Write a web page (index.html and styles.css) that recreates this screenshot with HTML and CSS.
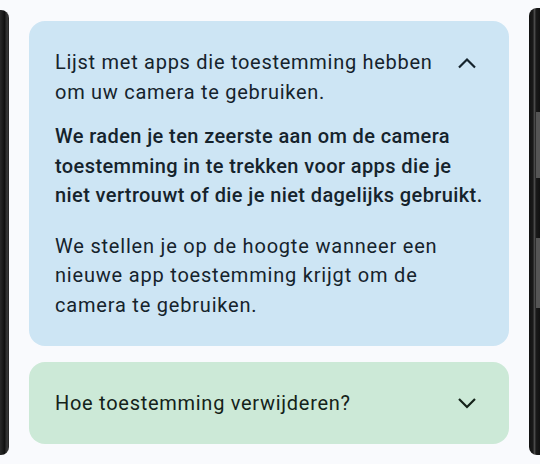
FILE: index.html
```html
<!DOCTYPE html>
<html lang="nl">
<head>
<meta charset="utf-8">
<link rel="stylesheet" href="styles.css">
</head>
<body>
<div class="frame">
  <div class="edge edge-left"></div>
  <main class="sheet">
    <section class="card card-blue">
      <div class="card-head">
        <p class="card-title">Lijst met apps die toestemming hebben om uw camera te gebruiken.</p>
        <svg class="chev chev-up" viewBox="0 0 20 12" width="20" height="12"><path d="M2 10.5 10 2.5l8 8"/></svg>
      </div>
      <p class="para strong">We raden je ten zeerste aan om de camera<br>toestemming in te trekken voor apps die je<br>niet vertrouwt of die je niet dagelijks gebruikt.</p>
      <p class="para">We stellen je op de hoogte wanneer een nieuwe app toestemming krijgt om de camera te gebruiken.</p>
    </section>
    <section class="card card-green">
      <div class="card-head">
        <p class="card-title">Hoe toestemming verwijderen?</p>
        <svg class="chev chev-down" viewBox="0 0 20 12" width="20" height="12"><path d="M2 2 10 10l8-8"/></svg>
      </div>
    </section>
  </main>
  <div class="edge edge-right">
    <span class="btn btn-a"></span>
    <span class="btn btn-b"></span>
  </div>
</div>
</body>
</html>
```

FILE: styles.css
```css
html, body {
  margin: 0;
  padding: 0;
  background: #f9fafd;
}
body {
  width: 540px;
  height: 464px;
  overflow: hidden;
  font-family: Roboto, "Noto Sans", sans-serif;
}
.frame {
  display: flex;
  height: 464px;
}
.edge {
  flex: none;
  background: #1b1b1b;
}
.edge-left {
  width: 9px;
  margin: 10px 0 9px 0;
  border-radius: 0 8px 8px 0;
  background: linear-gradient(90deg, #2a2a2a 0, #111 50%, #3a3a3a 80%, #222 100%);
}
.edge-right {
  width: 11px;
  margin: 8px 0 9px 0;
  border-radius: 8px 0 0 8px;
  background: linear-gradient(90deg, #111 0, #1a1a1a 35%, #4a4a4a 50%, #1a1a1a 65%, #111 100%);
  display: flex;
  flex-direction: column;
  align-items: flex-end;
}
.btn {
  width: 4px;
  background: #555;
}
.btn-a {
  margin-top: 104px;
  height: 66px;
}
.btn-b {
  margin-top: 60px;
  height: 70px;
}
.sheet {
  flex: 1;
  min-width: 0;
  padding: 21px 20px 0 20px;
  display: flex;
  flex-direction: column;
  gap: 16px;
}
.card {
  border-radius: 16px;
  padding: 26px 24px 26px 26px;
}
.card-blue {
  background: #cde5f4;
  color: #15232c;
}
.card-green {
  background: #cce9d7;
  color: #142219;
}
.card-head {
  display: flex;
  align-items: flex-start;
  justify-content: space-between;
}
.card-title {
  margin: 0;
  font-size: 20px;
  line-height: 30px;
  letter-spacing: 0.72px;
  max-width: 395px;
}
.chev {
  flex: none;
  margin: 10px 8px 0 0;
  fill: none;
  stroke: currentColor;
  stroke-width: 2.2;
}
.chev-down {
  margin-top: 9px;
}
.para {
  margin: 15px 0 0 0;
  font-size: 20px;
  line-height: 29.5px;
  letter-spacing: 0.8px;
}
.para + .para {
  margin-top: 21px;
}
.strong {
  font-weight: 500;
  letter-spacing: 0.4px;
  white-space: nowrap;
}
```
